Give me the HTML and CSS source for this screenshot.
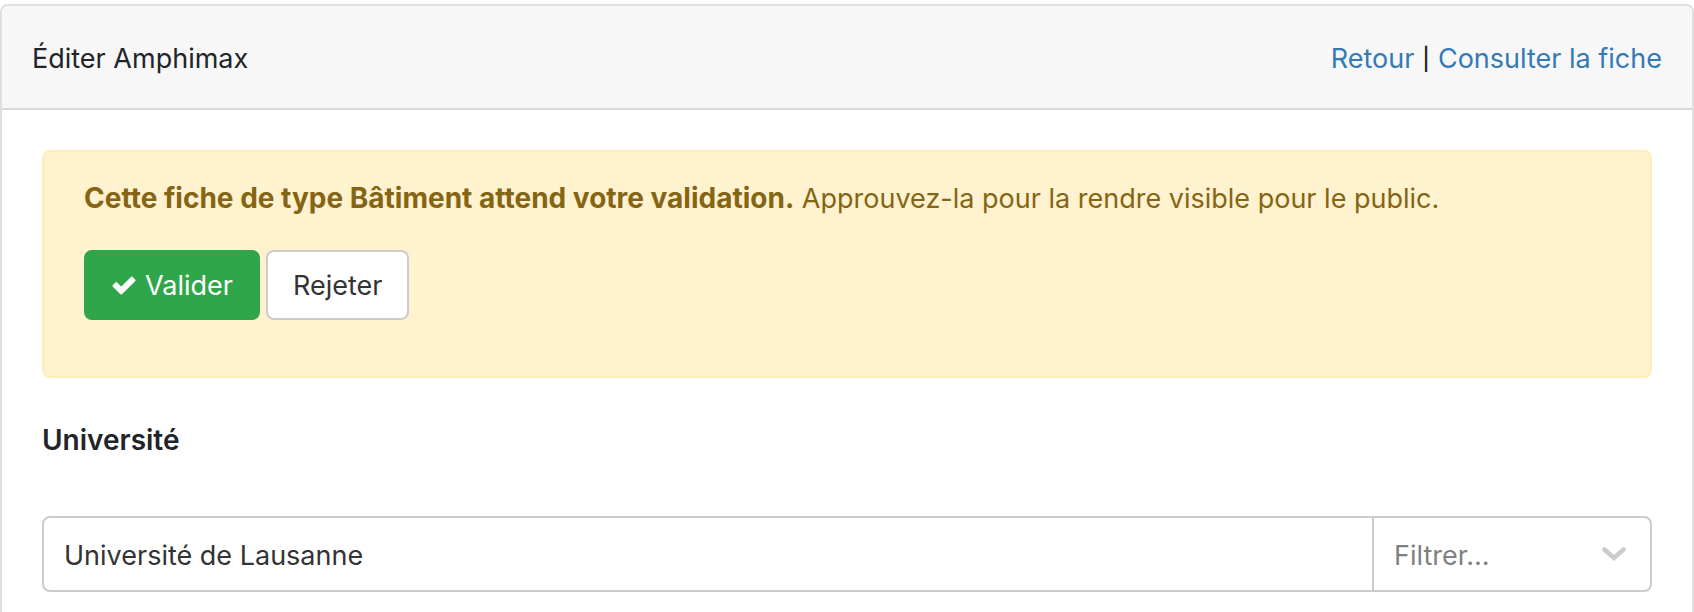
FILE: index.html
```html
<!DOCTYPE html>
<html lang="fr">
<head>
  <meta charset="utf-8">
  <meta name="viewport" content="width=device-width, initial-scale=1">
  <title>Éditer Amphimax</title>
  <link rel="stylesheet" href="styles.css">
</head>
<body>
  <main class="card">
    <header class="card-header">
      <span>Éditer Amphimax</span>
      <nav class="card-nav"><a href="#retour">Retour</a><span class="separator">|</span><a href="#fiche">Consulter la fiche</a></nav>
    </header>
    <form class="card-body">
      <section class="alert">
        <p class="alert-text"><strong>Cette fiche de type Bâtiment attend votre validation.</strong> Approuvez-la pour la rendre visible pour le public.</p>
        <div class="actions">
          <button type="button" class="btn btn-success">
            <svg class="check" viewBox="0 0 24 20" aria-hidden="true"><path d="M1.800 9.800L4.200 7.400L9.300 12.400L19.800 1.900L22.200 4.300L9.300 17.200Z" fill="currentColor" stroke="currentColor" stroke-width="2.600" stroke-linejoin="round"/></svg>
            Valider
          </button>
          <button type="button" class="btn btn-default">Rejeter</button>
        </div>
      </section>
      <label class="field-label" for="universite">Université</label>
      <div class="field-group">
        <input class="field-input" id="universite" type="text" value="Université de Lausanne">
        <div class="filter">
          <select class="filter-select" aria-label="Filtrer">
            <option>Filtrer...</option>
          </select>
          <svg class="chevron" viewBox="0 0 24 14" aria-hidden="true"><path d="M2.500 2.500L12 11L21.500 2.500" fill="none" stroke="currentColor" stroke-width="4.500" stroke-linecap="round"/></svg>
        </div>
      </div>
    </form>
  </main>
</body>
</html>
```
FILE: styles.css
```css
* {
  box-sizing: border-box;
}

body {
  display: flex;
  flex-direction: column;
  min-height: 100vh;
  margin: 0;
  padding-top: 4px;
  background: #fff;
  color: #212529;
  font-family: Inter, "Liberation Sans", sans-serif;
  font-size: 27px;
  font-variant-ligatures: none;
  line-height: 46px;
}

a {
  color: #337ab7;
  text-decoration: none;
}

.card {
  flex: 1;
  border: 2px solid #dfdfdf;
  border-bottom: 0;
  border-radius: 8px 8px 0 0;
}

.card-header {
  display: flex;
  justify-content: space-between;
  padding: 30px 30px 26px;
  border-bottom: 2px solid #d9d9d9;
  border-radius: 6px 6px 0 0;
  background: #f7f7f7;
}

.card-nav {
  display: flex;
  gap: 8px;
}

.separator {
  font-size: 22px;
  font-weight: 500;
}

.card-body {
  padding: 40px 40px 20px;
}

.alert {
  margin-bottom: 39px;
  padding: 23px 40px 56px;
  border: 2px solid #ffeeba;
  border-radius: 8px;
  background: #fff2cf;
  color: #856514;
}

.alert-text {
  margin: 0 0 28px;
}

.alert-text strong {
  font-size: 28px;
}

.actions {
  display: flex;
  gap: 6px;
}

.btn {
  display: flex;
  align-items: center;
  gap: 8px;
  height: 70px;
  padding: 2px 25px 0;
  border: 2px solid;
  border-radius: 8px;
  font: inherit;
}

.btn-success {
  border-color: #30a64a;
  background: #30a64a;
  color: #fff;
}

.btn-default {
  border-color: #ccc;
  background: #fff;
  color: #333;
}

.check {
  width: 26px;
  height: 20px;
}

.field-label {
  display: block;
  margin-bottom: 53px;
  font-size: 28px;
  font-weight: 600;
}

.field-group {
  display: flex;
  height: 76px;
  border: 2px solid #ccc;
  border-radius: 8px;
}

.field-input {
  flex: 1;
  min-width: 0;
  padding: 3px 20px 0;
  border: 0;
  background: transparent;
  color: #333;
  font: inherit;
}

.filter {
  display: grid;
  align-items: center;
  width: 278px;
  border-left: 2px solid #ccc;
}

.filter-select,
.chevron {
  grid-area: 1 / 1;
}

.filter-select {
  width: 100%;
  height: 100%;
  padding: 3px 20px 0;
  border: 0;
  appearance: none;
  background: transparent;
  color: #808080;
  font: inherit;
}

.chevron {
  justify-self: end;
  width: 24px;
  height: 14px;
  margin-right: 24px;
  color: #ccc;
  pointer-events: none;
}
```
